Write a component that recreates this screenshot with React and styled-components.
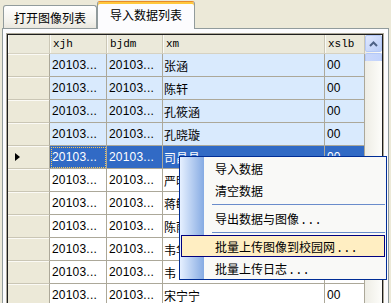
import React from 'react'
import styled, { createGlobalStyle } from 'styled-components'

const GlobalStyle = createGlobalStyle`
  html, body {
    margin: 0;
    padding: 0;
    background: #ece9d8;
    overflow: hidden;
  }
  body {
    font-family: "Noto Sans CJK SC", "Liberation Sans", sans-serif;
    font-size: 12px;
    color: #000;
  }
`

const Page = styled.div`
  position: relative;
  width: 391px;
  height: 303px;
  display: flex;
  flex-direction: column;
  overflow: hidden;
`

const TabStrip = styled.div`
  height: 28px;
  display: flex;
  align-items: flex-end;
  padding-left: 3px;
`

const Tab = styled.div`
  position: relative;
  box-sizing: border-box;
  display: flex;
  align-items: center;
  justify-content: center;
  width: ${p => (p.active ? 98 : 94)}px;
  height: ${p => (p.active ? 28 : 23)}px;
  margin-bottom: ${p => (p.active ? -1 : 0)}px;
  padding-bottom: ${p => (p.active ? 3 : 0)}px;
  z-index: ${p => (p.active ? 2 : 1)};
  border: 1px solid #919b9c;
  border-bottom: none;
  border-top-color: ${p => (p.active ? '#e68b2c' : '#919b9c')};
  border-radius: 3px 3px 0 0;
  background: ${p =>
    p.active ? '#fcfcfe' : 'linear-gradient(#ffffff, #f3f2ec 70%, #e9e7de)'};
  box-shadow: ${p => (p.active ? 'inset 0 2px 0 #ffc83c' : 'none')};
  font-size: 12px;
  white-space: nowrap;
`

const Panel = styled.div`
  flex: 1;
  min-height: 0;
  margin: 0 2px;
  border: 1px solid #919b9c;
  border-bottom: none;
  background: #fcfcfe;
  padding: 4px 0 0 3px;
  overflow: hidden;
`

const Grid = styled.div`
  width: 378px;
  height: 300px;
  box-sizing: border-box;
  border: 1px solid #aca899;
  display: flex;
`

const GridInner = styled.div`
  flex: 1;
  display: flex;
  border: 1px solid #1d1d1d;
  overflow: hidden;
`

const Table = styled.div`
  width: 357px;
  display: flex;
  flex-direction: column;
  background: #ffffff;
`

const cols = '42px 57px 56px 162px 40px'

const HeaderRow = styled.div`
  display: grid;
  grid-template-columns: ${cols};
  height: 19px;
  flex-shrink: 0;
  background: #ebe9da;
`

const HeaderCell = styled.div`
  box-sizing: border-box;
  display: flex;
  align-items: center;
  padding-left: 3px;
  border-right: 1px solid #cbc7b6;
  border-bottom: 1px solid #d6d2c2;
  box-shadow: inset 1px 0 0 #fafaf6;
  font-family: "Liberation Mono", monospace;
  font-size: 11px;
`

const DataRow = styled.div`
  display: grid;
  grid-template-columns: ${cols};
  height: 23px;
  flex-shrink: 0;
  background: ${p =>
    p.selected ? '#316ac5' : p.tinted ? '#d9eafd' : '#ffffff'};
  color: ${p => (p.selected ? '#ffffff' : '#000000')};
`

const RowHead = styled.div`
  box-sizing: border-box;
  display: flex;
  align-items: center;
  padding-left: 7px;
  background: #ece9d8;
  color: #000;
  border-right: 1px solid #aca899;
  border-bottom: 1px solid #cac6b5;
  box-shadow: inset 0 1px 0 #fbfaf5;
`

const Pointer = styled.div`
  width: 0;
  height: 0;
  border-top: 4px solid transparent;
  border-bottom: 4px solid transparent;
  border-left: 5px solid #000;
`

const Cell = styled.div`
  box-sizing: border-box;
  display: flex;
  align-items: center;
  padding-left: ${p => (p.cjk ? 1 : 2)}px;
  border-right: 1px solid #aca899;
  border-bottom: 1px solid #aca899;
  overflow: hidden;
  white-space: nowrap;
  font-family: ${p =>
    p.cjk
      ? '"Noto Sans CJK SC", sans-serif'
      : '"Liberation Sans", Arial, sans-serif'};
  font-size: 12px;
  letter-spacing: ${p => (p.cjk ? 0 : 0.2)}px;
  outline: ${p => (p.focus ? '1px dotted #f0c860' : 'none')};
  outline-offset: -2px;
`

const ScrollBar = styled.div`
  width: 17px;
  display: flex;
  flex-direction: column;
  background: linear-gradient(to right, #eeede5, #fdfdfa);
`

const ScrollButton = styled.div`
  height: 17px;
  box-sizing: border-box;
  border: 1px solid #b4c8f6;
  border-radius: 2px;
  background: linear-gradient(135deg, #e0e8fe, #b9cdf7);
  display: flex;
  align-items: center;
  justify-content: center;
`

const Thumb = styled.div`
  height: 8px;
  margin-top: 1px;
  box-sizing: border-box;
  border: 1px solid #b4c8f6;
  border-bottom: none;
  border-radius: 2px 2px 0 0;
  background: linear-gradient(to right, #cad8fb, #c2d3fc);
`

const Menu = styled.div`
  position: absolute;
  left: 179px;
  top: 156px;
  width: 208px;
  box-sizing: border-box;
  border: 1px solid #002d96;
  background: linear-gradient(
    to right,
    #e6f0ff 0px,
    #86abe3 24px,
    #f9f9f7 24px
  );
  display: flex;
  flex-direction: column;
  z-index: 5;
`

const MenuItem = styled.div`
  height: 22px;
  box-sizing: border-box;
  margin: 0 1px;
  display: flex;
  align-items: center;
  padding-left: 33px;
  font-size: 12px;
  white-space: nowrap;
  border: 1px solid ${p => (p.hot ? '#000080' : 'transparent')};
  background: ${p => (p.hot ? '#ffeec2' : 'transparent')};
`

const Dots = styled.span`
  align-self: flex-end;
  font-family: "Liberation Mono", monospace;
  font-size: 12px;
  line-height: 12px;
  margin: 0 0 1px 1px;
`

const Separator = styled.div`
  height: 6px;
  display: flex;
  align-items: center;
  padding-left: 32px;
  padding-right: 1px;

  &::after {
    content: '';
    flex: 1;
    height: 1px;
    background: #6a8ccb;
  }
`

// rows 6-10 of the xslb column lie under the context menu
const rows = [
  { xm: '张涵', xslb: '00', tinted: true },
  { xm: '陈轩', xslb: '00', tinted: true },
  { xm: '孔筱涵', xslb: '00', tinted: true },
  { xm: '孔晓璇', xslb: '00', tinted: true },
  { xm: '司昌昌', xslb: '00', selected: true },
  { xm: '严明' },
  { xm: '蒋敏' },
  { xm: '陈雨' },
  { xm: '韦华' },
  { xm: '韦' },
  { xm: '宋宁宁', xslb: '00' },
]

const UpArrow = () => (
  <svg width="9" height="6" viewBox="0 0 9 6">
    <polyline
      points="1,5 4.5,1.5 8,5"
      fill="none"
      stroke="#4d6185"
      strokeWidth="2"
    />
  </svg>
)

export default function App() {
  return (
    <Page>
      <GlobalStyle />
      <TabStrip>
        <Tab>打开图像列表</Tab>
        <Tab active>导入数据列表</Tab>
      </TabStrip>
      <Panel>
        <Grid>
          <GridInner>
            <Table>
              <HeaderRow>
                <HeaderCell />
                <HeaderCell>xjh</HeaderCell>
                <HeaderCell>bjdm</HeaderCell>
                <HeaderCell>xm</HeaderCell>
                <HeaderCell>xslb</HeaderCell>
              </HeaderRow>
              {rows.map((r, i) => (
                <DataRow key={i} tinted={r.tinted} selected={r.selected}>
                  <RowHead>{r.selected && <Pointer />}</RowHead>
                  <Cell focus={r.selected}>20103...</Cell>
                  <Cell>20103...</Cell>
                  <Cell cjk>{r.xm}</Cell>
                  <Cell>{r.xslb}</Cell>
                </DataRow>
              ))}
            </Table>
            <ScrollBar>
              <ScrollButton>
                <UpArrow />
              </ScrollButton>
              <Thumb />
            </ScrollBar>
          </GridInner>
        </Grid>
      </Panel>
      <Menu>
        <MenuItem>导入数据</MenuItem>
        <MenuItem>清空数据</MenuItem>
        <Separator />
        <MenuItem>
          导出数据与图像<Dots>...</Dots>
        </MenuItem>
        <Separator />
        <MenuItem hot>
          批量上传图像到校园网<Dots>...</Dots>
        </MenuItem>
        <MenuItem>
          批量上传日志<Dots>...</Dots>
        </MenuItem>
      </Menu>
    </Page>
  )
}
